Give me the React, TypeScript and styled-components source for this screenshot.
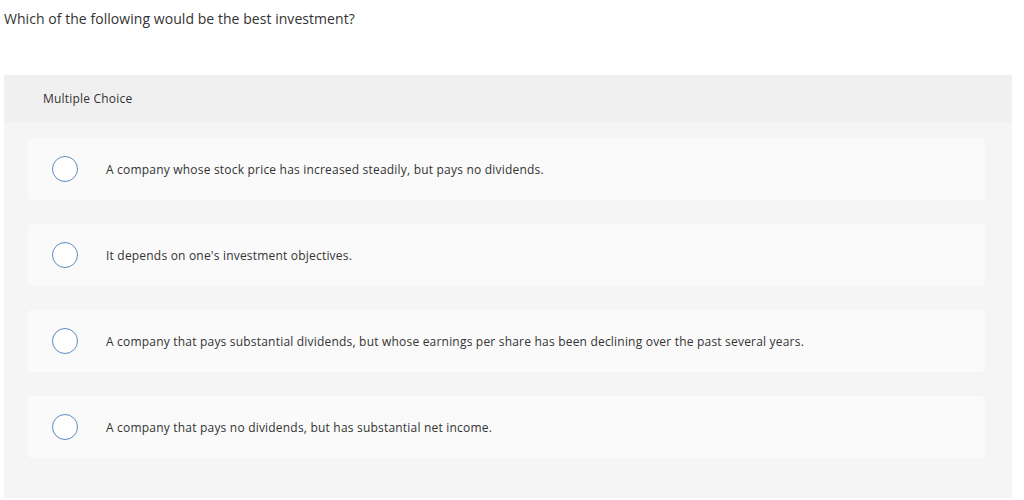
import styled, { createGlobalStyle } from 'styled-components';

const GlobalStyle = createGlobalStyle`
  html, body {
    margin: 0;
    padding: 0;
    background: #fff;
    font-family: "Open Sans", "Liberation Sans", Arial, sans-serif;
    color: #333;
  }
`;

const Page = styled.div`
  padding: 11px 12px 0 4px;
`;

const Question = styled.p`
  margin: 0;
  font-size: 14px;
  line-height: 16px;
  letter-spacing: 0.05px;
  color: #333;
`;

const Panel = styled.section`
  margin-top: 48px;
  border-radius: 3px 3px 0 0;
  background: #f5f5f5;
  overflow: hidden;
`;

const PanelHeader = styled.header`
  height: 47px;
  background: #f0f0f0;
  display: flex;
  align-items: center;
  padding-left: 39px;
  font-size: 12px;
  letter-spacing: 0.2px;
  color: #333;
`;

const Options = styled.div`
  display: flex;
  flex-direction: column;
  gap: 24px;
  padding: 16px 27px 40px 24px;
`;

const Option = styled.label`
  display: flex;
  align-items: center;
  height: 62px;
  padding-left: 24px;
  background: #fafafa;
  border-radius: 4px;
  cursor: pointer;
`;

const Radio = styled.span`
  flex: none;
  width: 24px;
  height: 24px;
  border-radius: 50%;
  border: 1.5px solid #5d8cc0;
  background: #fff;
`;

const OptionText = styled.span`
  margin-left: 28px;
  font-size: 12px;
  letter-spacing: 0.2px;
  color: #333;
`;

const answers = [
  'A company whose stock price has increased steadily, but pays no dividends.',
  "It depends on one's investment objectives.",
  'A company that pays substantial dividends, but whose earnings per share has been declining over the past several years.',
  'A company that pays no dividends, but has substantial net income.',
];

export default function App() {
  return (
    <>
      <GlobalStyle />
      <Page>
        <Question>Which of the following would be the best investment?</Question>
        <Panel>
          <PanelHeader>Multiple Choice</PanelHeader>
          <Options>
            {answers.map((a) => (
              <Option key={a}>
                <Radio />
                <OptionText>{a}</OptionText>
              </Option>
            ))}
          </Options>
        </Panel>
      </Page>
    </>
  );
}
